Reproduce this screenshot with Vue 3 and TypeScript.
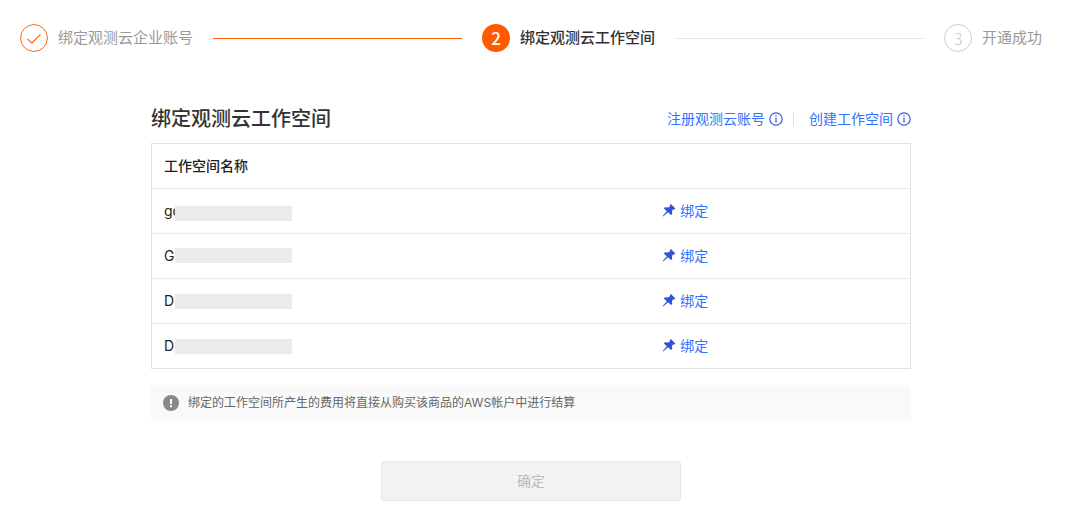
<script setup lang="ts">
interface Workspace {
  id: number
  name: string
  maskTop: number
}

const workspaces: Workspace[] = [
  { id: 1, name: 'go', maskTop: 17 },
  { id: 2, name: 'G', maskTop: 14 },
  { id: 3, name: 'D', maskTop: 15 },
  { id: 4, name: 'D', maskTop: 15 },
]
</script>

<template>
  <main class="page">
    <ol class="steps">
      <li class="step done">
        <svg class="badge" viewBox="0 0 28 28" aria-hidden="true">
          <circle cx="14" cy="14" r="13.5" fill="none" stroke="#ff5a00" />
          <path d="M7.5 14.8 L11.8 19 L20.5 10.3" fill="none" stroke="#ff5a00" stroke-width="1.1" />
        </svg>
        <span class="step-label">绑定观测云企业账号</span>
        <span class="line"></span>
      </li>
      <li class="step current" aria-current="step">
        <span class="badge">2</span>
        <span class="step-label">绑定观测云工作空间</span>
        <span class="line"></span>
      </li>
      <li class="step pending">
        <span class="badge">3</span>
        <span class="step-label">开通成功</span>
      </li>
    </ol>

    <section class="content">
      <header class="head">
        <h1>绑定观测云工作空间</h1>
        <nav class="links">
          <a href="#register">注册观测云账号
            <svg class="info" viewBox="0 0 14 14" aria-hidden="true">
              <circle cx="7" cy="7" r="6.2" />
              <path d="M7 5.6 V10.8 M7 3.2 V4.5" />
            </svg>
          </a>
          <span class="divider"></span>
          <a href="#create">创建工作空间
            <svg class="info" viewBox="0 0 14 14" aria-hidden="true">
              <circle cx="7" cy="7" r="6.2" />
              <path d="M7 5.6 V10.8 M7 3.2 V4.5" />
            </svg>
          </a>
        </nav>
      </header>

      <table class="table">
        <thead>
          <tr>
            <th scope="col">工作空间名称</th>
            <td></td>
          </tr>
        </thead>
        <tbody>
          <tr v-for="w in workspaces" :key="w.id">
            <td class="name">
              {{ w.name }}
              <span class="mask" :style="{ top: w.maskTop + 'px' }"></span>
            </td>
            <td class="action">
              <button type="button" class="bind">
                <svg class="pin" viewBox="0 0 14 14" aria-hidden="true">
                  <path d="M8.9 0 L13.4 4.4 L12.5 5.4 L11.4 5.3 L10 6.9 L10.2 9.9 L9 10.9 L6 8.3 L1.2 12.4 L0.7 11.9 L4.8 7.2 L1.9 4.5 L2.9 3.2 L6.2 3.5 L8.2 2 L7.9 0.9 Z" />
                </svg>
                绑定
              </button>
            </td>
          </tr>
        </tbody>
      </table>

      <p class="notice">
        <svg class="warn" viewBox="0 0 16 16" aria-hidden="true">
          <circle cx="8" cy="8" r="8" fill="#888" />
          <path d="M8 4 V9 M8 10.2 V12.2" stroke="#fff" stroke-width="2" />
        </svg>
        <span>绑定的工作空间所产生的费用将直接从购买该商品的AWS帐户中进行结算</span>
      </p>

      <button type="button" class="confirm" disabled>确定</button>
    </section>
  </main>
</template>

<style>
body {
  background: #fff;
}
</style>

<style scoped>
.page {
  padding: 24px 34px 24px 20px;
  font-family: Inter, "Noto Sans CJK SC", sans-serif;
  font-size: 14px;
  line-height: 20px;
  color: #222;
}

.steps {
  display: flex;
  gap: 20px;
  margin: 0;
  padding: 0;
  list-style: none;
}

.step {
  display: flex;
  align-items: center;
  flex: 1 1 0;
  height: 28px;
  font-size: 15px;
  color: #999;
}

.step:last-child {
  flex: none;
}

.badge {
  display: flex;
  flex: none;
  align-items: center;
  justify-content: center;
  box-sizing: border-box;
  width: 28px;
  height: 28px;
  margin-right: 10px;
  border-radius: 50%;
  font-family: "Noto Sans CJK SC", sans-serif;
  font-size: 17px;
}

.step-label {
  flex: none;
}

.line {
  flex: 1;
  height: 1px;
  margin-left: 20px;
  background: #e4e4e8;
}

.done .line {
  background: #ff5a00;
}

.current {
  color: #303133;
  font-weight: 500;
}

.current .badge {
  background: #ff5a00;
  color: #fff;
}

.pending .badge {
  border: 1px solid #ccc;
  color: #ccc;
  font-weight: 300;
}

.content {
  max-width: 760px;
  margin: 52px auto 0;
}

.head {
  display: flex;
  align-items: center;
  justify-content: space-between;
  height: 30px;
  margin-bottom: 9px;
}

h1 {
  margin: 0;
  font-size: 20px;
  line-height: 30px;
  font-weight: 500;
  color: #333;
}

.links {
  display: flex;
  align-items: center;
}

.links a {
  display: flex;
  align-items: center;
  gap: 4px;
  color: #3370ff;
  text-decoration: none;
}

.divider {
  width: 1px;
  height: 14px;
  margin: 0 15px 0 10px;
  background: #dcdfe6;
}

.info {
  width: 14px;
  height: 14px;
  fill: none;
  stroke: #4259d6;
  stroke-width: 1.2;
}

.table {
  width: 100%;
  border: 1px solid #dfe1e6;
  border-spacing: 0;
  table-layout: fixed;
}

.table th,
.table td {
  box-sizing: border-box;
  height: 45px;
  padding: 0 12px;
  border-bottom: 1px solid #e8eaee;
  text-align: left;
}

.table tr > :first-child {
  width: 66%;
}

.table tbody tr:last-child td {
  height: 44px;
  border-bottom: 0;
}

.table th {
  font-weight: 500;
}

.name {
  position: relative;
}

.mask {
  position: absolute;
  left: 23px;
  width: 117px;
  height: 15px;
  background: #ebebeb;
}

.table .action {
  padding: 0 10px;
}

.bind {
  display: flex;
  align-items: center;
  gap: 4px;
  padding: 0;
  border: 0;
  background: none;
  color: #3370ff;
  font: inherit;
  cursor: pointer;
}

.pin {
  width: 14px;
  height: 14px;
  fill: #2f54d4;
}

.notice {
  display: flex;
  align-items: center;
  gap: 9px;
  height: 36px;
  margin: 16px 0 40px;
  padding: 0 12px;
  background: #f9f9f9;
  color: #666;
  font-size: 12px;
}

.warn {
  width: 16px;
  height: 16px;
}

.confirm {
  display: block;
  width: 300px;
  height: 40px;
  margin: 0 auto;
  border: 1px solid #e6e6e6;
  border-radius: 3px;
  background: #f3f3f3;
  color: #bbbcc2;
  font: inherit;
}
</style>
